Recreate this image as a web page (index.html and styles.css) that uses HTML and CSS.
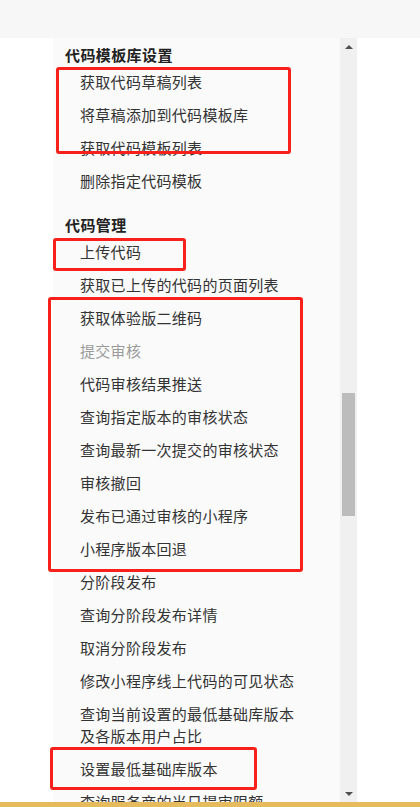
FILE: index.html
```html
<!DOCTYPE html>
<html lang="zh-CN">
<head>
<meta charset="utf-8">
<title>代码管理</title>
<link rel="stylesheet" href="styles.css">
</head>
<body>
<div class="page">
  <div class="topbar"></div>
  <div class="main">
    <div class="gutter"></div>
    <nav class="sidebar">
      <div class="group first">
        <div class="heading">代码模板库设置</div>
        <div class="item">获取代码草稿列表</div>
        <div class="item">将草稿添加到代码模板库</div>
        <div class="item">获取代码模板列表</div>
        <div class="item">删除指定代码模板</div>
      </div>
      <div class="group">
        <div class="heading">代码管理</div>
        <div class="item">上传代码</div>
        <div class="item">获取已上传的代码的页面列表</div>
        <div class="item">获取体验版二维码</div>
        <div class="item muted">提交审核</div>
        <div class="item">代码审核结果推送</div>
        <div class="item">查询指定版本的审核状态</div>
        <div class="item">查询最新一次提交的审核状态</div>
        <div class="item">审核撤回</div>
        <div class="item">发布已通过审核的小程序</div>
        <div class="item">小程序版本回退</div>
        <div class="item">分阶段发布</div>
        <div class="item">查询分阶段发布详情</div>
        <div class="item">取消分阶段发布</div>
        <div class="item">修改小程序线上代码的可见状态</div>
        <div class="item">查询当前设置的最低基础库版本<br>及各版本用户占比</div>
        <div class="item">设置最低基础库版本</div>
        <div class="item">查询服务商的当日提审限额</div>
      </div>
    </nav>
    <div class="scrollbar">
      <div class="sb-btn"><span class="arrow-up"></span></div>
      <div class="sb-thumb"></div>
      <div class="sb-btn sb-bottom"><span class="arrow-down"></span></div>
    </div>
    <div class="rightpane"></div>
  </div>
  <div class="footer"></div>

  <div class="mark mark1"></div>
  <div class="mark mark2"></div>
  <div class="mark mark3"></div>
  <div class="mark mark4"></div>
</div>
</body>
</html>
```
FILE: styles.css
```css
html, body {
  margin: 0;
  padding: 0;
  background: #ffffff;
}
body {
  font-family: "Noto Sans CJK SC", "Noto Sans", sans-serif;
  font-size: 15px;
  color: #333333;
}
.page {
  position: relative;
  width: 420px;
  height: 807px;
  overflow: hidden;
}
.topbar {
  height: 38px;
  background: #f7f7f7;
}
.main {
  display: flex;
  height: 764px;
}
.gutter {
  width: 53px;
  background: #ffffff;
}
.sidebar {
  width: 287px;
  background: #fafafa;
  overflow: hidden;
}
.group .heading {
  padding: 16px 0 0 12px;
  line-height: 22px;
  font-weight: bold;
  color: #222222;
  letter-spacing: 0.4px;
}
.group.first .heading {
  padding-top: 6px;
}
.item {
  padding: 5px 0 6px 27px;
  line-height: 22px;
  letter-spacing: 0.3px;
  color: #333333;
  white-space: nowrap;
}
.item.muted {
  color: #9a9a9a;
}
.scrollbar {
  width: 17px;
  background: #f0f0f0;
  display: flex;
  flex-direction: column;
  align-items: center;
}
.sb-btn {
  height: 17px;
  width: 17px;
  display: flex;
  align-items: center;
  justify-content: center;
}
.sb-bottom {
  margin-top: auto;
}
.arrow-up {
  width: 0;
  height: 0;
  border-left: 4px solid transparent;
  border-right: 4px solid transparent;
  border-bottom: 4px solid #505050;
}
.arrow-down {
  width: 0;
  height: 0;
  border-left: 4px solid transparent;
  border-right: 4px solid transparent;
  border-top: 4px solid #505050;
}
.sb-thumb {
  width: 13px;
  height: 123px;
  margin-top: 338px;
  background: #bcbcbc;
}
.rightpane {
  flex: 1;
  background: #ffffff;
}
.footer {
  height: 5px;
  background: #e5bb5e;
}
.mark {
  position: absolute;
  border: 3px solid #f8201a;
  border-radius: 3px;
  box-sizing: border-box;
}
.mark1 { left: 56px; top: 67px; width: 235px; height: 87px; }
.mark2 { left: 53px; top: 238px; width: 133px; height: 33px; }
.mark3 { left: 48px; top: 297px; width: 255px; height: 275px; }
.mark4 { left: 50px; top: 747px; width: 207px; height: 43px; }
```
